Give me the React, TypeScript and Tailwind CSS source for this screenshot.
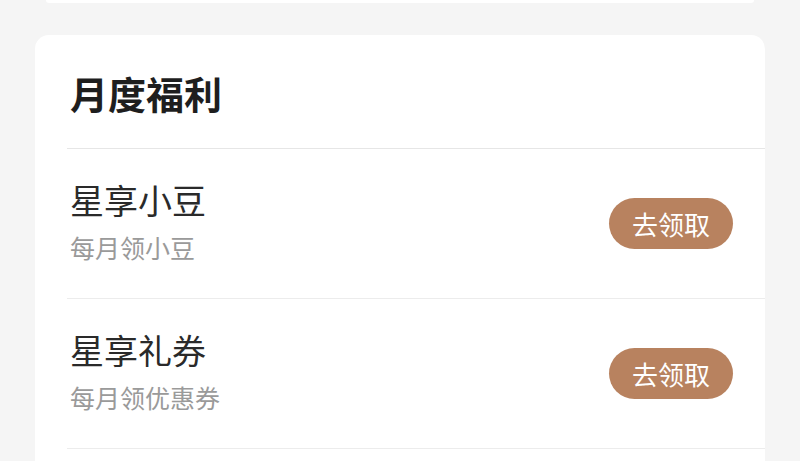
import React from 'react';

const items = [
  { title: '星享小豆', desc: '每月领小豆' },
  { title: '星享礼券', desc: '每月领优惠券' },
];

const App = () => {
  return (
    <div
      className="h-[461px] w-[800px] overflow-hidden bg-[#f5f5f5]"
      style={{ fontFamily: '"Noto Sans CJK SC", "Noto Sans", sans-serif' }}
    >
      <div className="mx-[46px] h-[3px] rounded-b-[6px] bg-white" />
      <div className="mx-[35px] mt-[32px] h-[440px] rounded-[14px] bg-white pl-[32px]">
        <div className="flex h-[114px] items-center border-b border-[#e6e6e6] pl-[3px] pt-[2px]">
          <h2 className="text-[38px] font-bold leading-none text-[#1e1e1e]">月度福利</h2>
        </div>
        {items.map((item) => (
          <div
            key={item.title}
            className="flex h-[150px] items-center justify-between border-b border-[#ececec] pl-[3px] pr-[32px]"
          >
            <div className="flex flex-col pb-[5px]">
              <span className="text-[34px] leading-[40px] text-[#2a2a2a]">{item.title}</span>
              <span className="mt-[12px] text-[25px] leading-[30px] text-[#9a9a9a]">{item.desc}</span>
            </div>
            <button className="flex h-[51px] w-[124px] items-center justify-center rounded-full bg-[#b8825f] text-[26px] text-white">
              去领取
            </button>
          </div>
        ))}
      </div>
    </div>
  );
};

export default App;
